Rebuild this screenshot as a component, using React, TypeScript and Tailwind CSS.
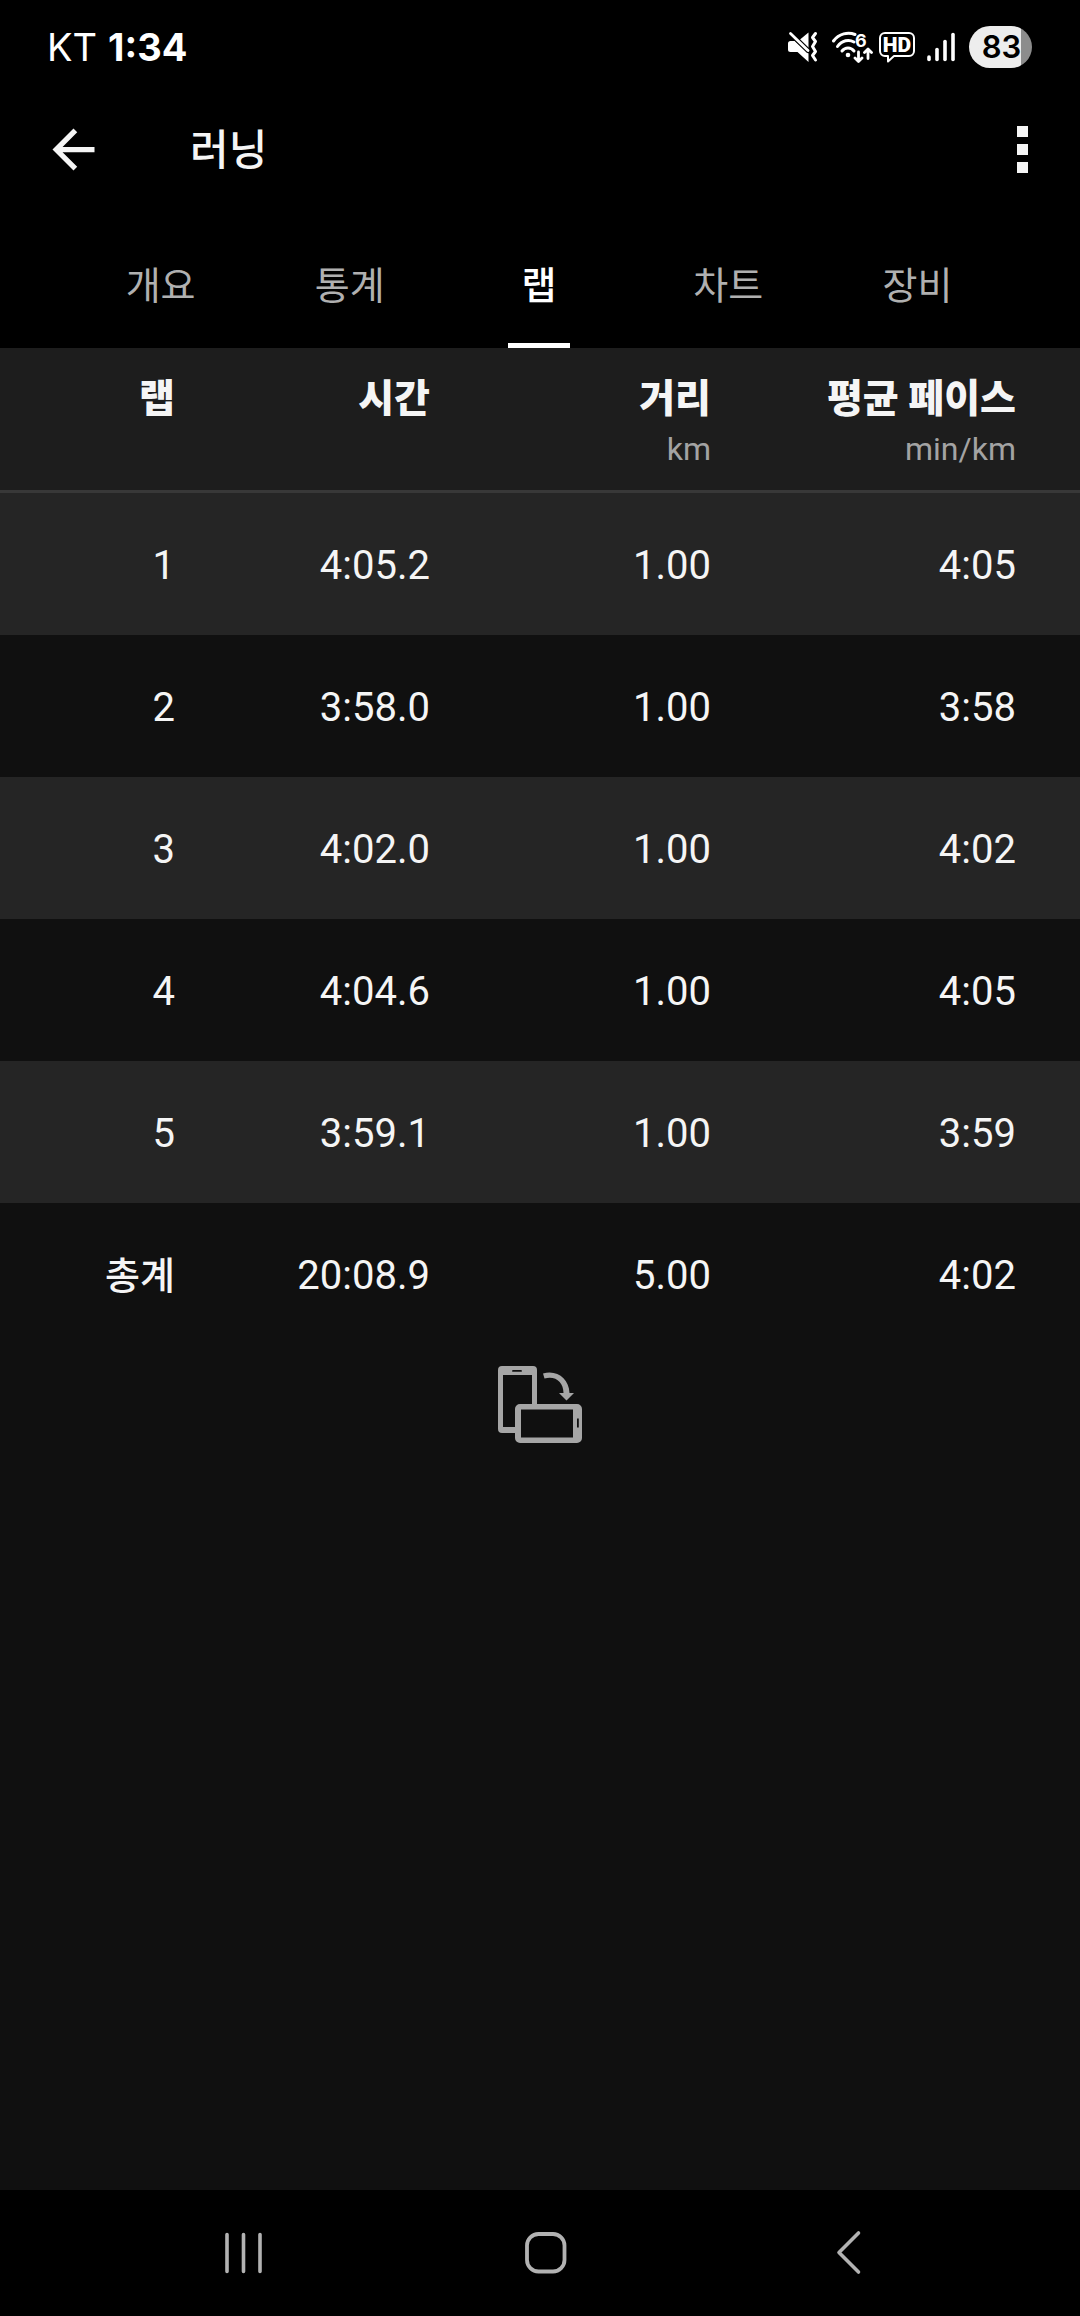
import React from 'react';
import { MdArrowBack } from 'react-icons/md';

const TABS = ['개요', '통계', '랩', '차트', '장비'];
const ACTIVE_TAB = '랩';

const COLUMNS = [
    { label: '랩', unit: '', width: 'w-[239px]' },
    { label: '시간', unit: '', width: 'w-[255px]' },
    { label: '거리', unit: 'km', width: 'w-[281px]' },
    { label: '평균 페이스', unit: 'min/km', width: 'w-[305px]' },
];

const LAPS = [
    ['1', '4:05.2', '1.00', '4:05'],
    ['2', '3:58.0', '1.00', '3:58'],
    ['3', '4:02.0', '1.00', '4:02'],
    ['4', '4:04.6', '1.00', '4:05'],
    ['5', '3:59.1', '1.00', '3:59'],
];

const TOTAL = ['20:08.9', '5.00', '4:02'];

const MuteIcon = () => (
    <svg width="32" height="32" viewBox="0 0 32 32" fill="none" aria-hidden="true">
        <path d="M3.500 10H8l13.500 12.500V31L10.500 21h-7A2.500 2.500 0 0 1 1 18.500v-6A2.500 2.500 0 0 1 3.500 10z" fill="#fff" />
        <path d="M13 8.500L21.500 1.500V17z" fill="#fff" />
        <path d="M4 3L22 20.500" stroke="#000" strokeWidth="5" />
        <path d="M3.500 2.500L21 19.500" stroke="#fff" strokeWidth="2.800" strokeLinecap="round" />
        <path
            d="M28.500 2.500l-3 4 3 4-3 5 3 5-3 4 3 4.500"
            stroke="#fff"
            strokeWidth="3"
            strokeLinecap="round"
            strokeLinejoin="round"
        />
    </svg>
);

const WifiIcon = () => (
    <svg width="42" height="32" viewBox="0 0 42 32" fill="none" aria-hidden="true">
        <g stroke="#fff" strokeWidth="3" strokeLinecap="round">
            <path d="M2.500 10C8 2.500 17 .8 24 3.500" />
            <path d="M6.500 15.500C11 9.200 18 8 23 11" />
            <path d="M11 20c3.200-4 8.800-4 12 0" />
        </g>
        <circle cx="17" cy="24" r="2.300" fill="#fff" />
        <text x="24" y="16" fill="#fff" fontSize="18" fontWeight="700" fontFamily="Inter, sans-serif">
            6
        </text>
        <g stroke="#fff" strokeWidth="2.800" strokeLinecap="round" strokeLinejoin="round">
            <path d="M27.500 21v9M24 27l3.500 3.500L31 27" />
            <path d="M37 27.500V18.500M33.500 21.500L37 18l3.500 3.500" />
        </g>
    </svg>
);

const HdIcon = () => (
    <svg width="36" height="32" viewBox="0 0 36 32" fill="none" aria-hidden="true">
        <path
            d="M6 2h24a5 5 0 0 1 5 5v13a5 5 0 0 1-5 5H15l-6 5.500V25H6a5 5 0 0 1-5-5V7a5 5 0 0 1 5-5z"
            stroke="#fff"
            strokeWidth="2"
            strokeLinejoin="round"
        />
        <text x="18" y="21" textAnchor="middle" fill="#fff" fontSize="21" fontWeight="900" fontFamily="Roboto, sans-serif">
            HD
        </text>
    </svg>
);

const SignalIcon = () => (
    <svg width="28" height="32" viewBox="0 0 28 32" aria-hidden="true">
        <g stroke="#fff" strokeWidth="3.600" strokeLinecap="round">
            <path d="M2 26v2.500" />
            <path d="M10 18.500v10" />
            <path d="M18 10.500v18" />
            <path d="M26 3.500v25" />
        </g>
    </svg>
);

const StatusBar = () => (
    <div className="flex h-[94px] items-center justify-between bg-black pr-12 pl-[47px] font-['Inter',sans-serif] text-[38px] text-white">
        <div className="flex items-center gap-[11px]">
            <span>KT</span>
            <span className="font-bold">1:34</span>
        </div>
        <div className="flex items-center">
            <div className="flex items-center gap-3">
                <MuteIcon />
                <div className="flex items-center gap-[6px]">
                    <WifiIcon />
                    <HdIcon />
                </div>
                <SignalIcon />
            </div>
            <div className="ml-[14px] flex h-[42px] w-[63px] items-center justify-center rounded-full bg-linear-to-r from-[#ededed] from-82% to-[#8c8c8c] to-82% pl-[2px] text-[31px] font-semibold text-black">
                83
            </div>
        </div>
    </div>
);

const AppHeader = () => (
    <header className="flex h-[110px] items-center bg-black pr-[44px] pl-[42px] text-[#f5f5f5]">
        <button type="button" aria-label="뒤로">
            <MdArrowBack size={63} />
        </button>
        <h1 className="ml-[85px] pt-[3px] text-[42px] font-medium">러닝</h1>
        <button type="button" aria-label="더보기" className="ml-auto flex flex-col gap-[7px] px-2">
            <span className="size-[11px] bg-current" />
            <span className="size-[11px] bg-current" />
            <span className="size-[11px] bg-current" />
        </button>
    </header>
);

const TabBar = () => (
    <nav className="flex bg-black pt-[18px] pr-[68px] pl-[66px]">
        {TABS.map((tab) => {
            const active = tab === ACTIVE_TAB;
            return (
                <button
                    key={tab}
                    type="button"
                    aria-current={active ? 'page' : undefined}
                    className={`relative flex h-[126px] flex-1 items-center justify-center pt-[3px] text-[38px] ${
                        active ? 'font-medium text-white' : 'text-[#b0b0b0]'
                    }`}
                >
                    {tab}
                    {active && <span className="absolute bottom-0 h-[5px] w-[62px] bg-white" />}
                </button>
            );
        })}
    </nav>
);

const LapTable = () => (
    <table className="w-full table-fixed border-separate border-spacing-0 text-right text-[40px] text-[#f5f5f5]">
        <thead>
            <tr className="bg-[#1d1d1d]">
                {COLUMNS.map((column) => (
                    <th
                        key={column.label}
                        scope="col"
                        className={`${column.width} border-b-3 border-[#383838] pt-[23px] pr-16 pb-[19px] align-top font-black`}
                    >
                        <div className="text-[39px] leading-[56px] whitespace-nowrap">{column.label}</div>
                        {column.unit && (
                            <div className="text-[32px] leading-[44px] font-normal text-[#a3a3a3]">{column.unit}</div>
                        )}
                    </th>
                ))}
            </tr>
        </thead>
        <tbody>
            {LAPS.map((lap) => (
                <tr key={lap[0]} className="h-[142px] odd:bg-[#252525]">
                    {lap.map((value, i) => (
                        <td key={i} className="pt-1 pr-16">{value}</td>
                    ))}
                </tr>
            ))}
        </tbody>
        <tfoot>
            <tr className="h-[142px]">
                <th scope="row" className="pt-1 pr-16 text-[38px] font-medium">총계</th>
                {TOTAL.map((value, i) => (
                    <td key={i} className="pt-1 pr-16">{value}</td>
                ))}
            </tr>
        </tfoot>
    </table>
);

const RotateHint = () => (
    <svg className="mx-auto mt-[21px]" width="84" height="77" viewBox="0 0 84 77" role="img" aria-label="화면 회전">
        {/* Portrait phone */}
        <path
            fill="#a6a6a6"
            fillRule="evenodd"
            d="M4 0h31a4 4 0 0 1 4 4v34h-5V9H5v52h13v6H4a4 4 0 0 1-4-4V4a4 4 0 0 1 4-4zM15 4h8a.8.8 0 0 1 0 1.800h-8A.8.8 0 0 1 15 4z"
        />
        {/* Landscape phone */}
        <path
            fill="#a6a6a6"
            fillRule="evenodd"
            d="M22 38h57a5 5 0 0 1 5 5v29a5 5 0 0 1-5 5H22a5 5 0 0 1-5-5V43a5 5 0 0 1 5-5zM23 43.500v28h52v-28zM79 52.500h1.800v9H79z"
        />
        <path fill="#a6a6a6" d="M45 7.500c14-4 26 5 26.500 19.500H76L68.500 34.500 61 27h4.500c0-11-8-17.500-19-14.500z" />
    </svg>
);

const SystemNav = () => (
    <footer className="flex h-[126px] items-center justify-center gap-[232px] bg-black pl-[12px]">
        <button type="button" aria-label="최근 앱">
            <svg width="72" height="48" viewBox="0 0 72 48" stroke="#b2b2b2" strokeWidth="3.600" strokeLinecap="round">
                <path d="M21 5.500v37M37.500 5.500v37M54 5.500v37" />
            </svg>
        </button>
        <button type="button" aria-label="홈">
            <svg width="72" height="48" viewBox="0 0 72 48" fill="none" stroke="#b2b2b2" strokeWidth="3.800">
                <rect x="17" y="5" width="37.500" height="37.500" rx="11.500" />
            </svg>
        </button>
        <button type="button" aria-label="뒤로 가기">
            <svg
                width="72"
                height="48"
                viewBox="0 0 72 48"
                fill="none"
                stroke="#b2b2b2"
                strokeWidth="3.600"
                strokeLinecap="round"
                strokeLinejoin="round"
            >
                <path d="M44.500 4L25 23.500 44.500 43" />
            </svg>
        </button>
    </footer>
);

export default function App() {
    return (
        <div className="flex min-h-screen flex-col bg-[#101010] font-['Roboto','Noto_Sans_CJK_KR',sans-serif]">
            <StatusBar />
            <AppHeader />
            <TabBar />
            <main className="flex-1">
                <LapTable />
                <RotateHint />
            </main>
            <SystemNav />
        </div>
    );
}
